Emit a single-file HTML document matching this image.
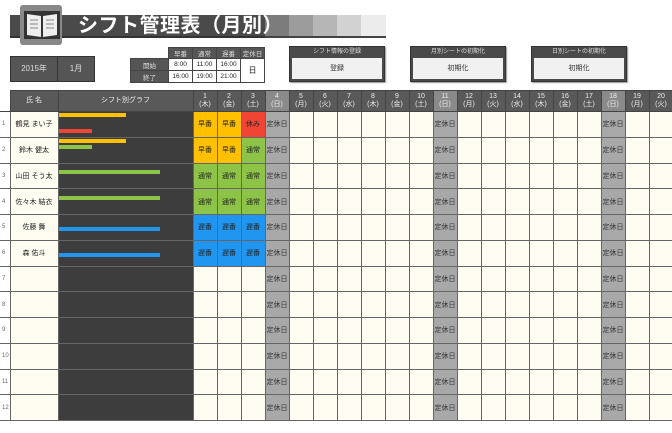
<!DOCTYPE html>
<html><head><meta charset="utf-8">
<style>
*{margin:0;padding:0;box-sizing:border-box}
body{width:672px;height:433px;background:#fff;position:relative;overflow:hidden;font-family:"Liberation Sans","Noto Sans CJK JP",sans-serif;color:#222}
.abs{position:absolute}
table{border-collapse:collapse;table-layout:fixed}
#g{position:absolute;left:0;top:90px;width:673px}
#g td{border:1px solid #555;font-size:7px;text-align:center;overflow:hidden;white-space:nowrap;padding:0}
#g tr.h td{background:#595959;color:#eee;height:21px;line-height:8px;border-color:#444}
#g tr.r td{height:25.75px;background:#fffcf2;border-color:#666}
#g td.n{border:none;border-bottom:1px solid #666;background:#fff !important;color:#666;font-size:6px;text-align:left;padding-left:2px}
#g tr.h td.n{background:#fff !important}
#g td.g{background:#3d3d3d !important;border-color:#2a2a2a}
#g td.y{background:#ffc000 !important}
#g td.rd{background:#f04535 !important}
#g td.gr{background:#8dc447 !important}
#g td.b{background:#2196f0 !important}
#g td.x{background:#a8a8a8 !important;color:#333}
#g tr.h td.x{background:#8a8a8a !important}
.R{color:#e03030}.B{color:#2a8ae8}
.bar{position:absolute;left:59px;height:4px}
.btn{position:absolute;width:96px;height:36px;background:#4a4a4a;border:1px solid #333;box-shadow:1px 1px 1px #999}
.btn .t{color:#ddd;font-size:6px;text-align:center;height:10px;line-height:10px}
.btn .c{position:absolute;left:2px;right:2px;top:11px;bottom:2px;background:#f1f1f1;font-size:7px;text-align:center;line-height:22px;color:#333}
#tt td{border:1px solid #444;font-size:6.5px;text-align:center;padding:0}
</style></head><body>
<!-- title bar -->
<div class="abs" style="left:10px;top:15px;width:255px;height:23px;background:#4a4a4a;border-bottom:2px solid #333"></div>
<div class="abs" style="left:265px;top:15px;width:24px;height:23px;background:#7c7c7c"></div>
<div class="abs" style="left:289px;top:15px;width:24px;height:23px;background:#9c9c9c"></div>
<div class="abs" style="left:313px;top:15px;width:24px;height:23px;background:#b6b6b6"></div>
<div class="abs" style="left:337px;top:15px;width:24px;height:23px;background:#d2d2d2"></div>
<div class="abs" style="left:361px;top:15px;width:25px;height:23px;background:#ececec"></div>
<div class="abs" style="left:265px;top:36px;width:121px;height:2px;background:#444"></div>
<div class="abs" style="left:20px;top:5px;width:42px;height:40px;background:#888;border-radius:3px"></div>
<svg class="abs" style="left:22px;top:9px" width="40" height="32" viewBox="0 0 40 32">
<rect x="2" y="2" width="36" height="28" fill="#333"/>
<path d="M5 5 L19 7 L19 28 L5 26Z" fill="#eee"/><path d="M35 5 L21 7 L21 28 L35 26Z" fill="#eee"/>
<g stroke="#888" stroke-width="1"><path d="M8 11h8M8 15h8M8 19h8M24 11h8M24 15h8M24 19h8"/></g>
</svg>
<div class="abs" style="left:78px;top:15px;font-size:20px;line-height:23px;color:#fff;font-weight:bold;letter-spacing:0.5px">シフト管理表（月別）</div>
<!-- year/month -->
<div class="abs" style="left:10px;top:56px;width:85px;height:26px;background:#555;border:1px solid #333"></div>
<div class="abs" style="left:11px;top:57px;width:47px;height:24px;color:#ddd;font-size:8px;line-height:24px;text-align:center;border-right:1px solid #333">2015年</div>
<div class="abs" style="left:58px;top:57px;width:36px;height:24px;color:#ddd;font-size:8px;line-height:24px;text-align:center">1月</div>
<!-- time table -->
<table id="tt" class="abs" style="left:130px;top:47px;width:135px">
<tr style="height:11px"><td style="border:none;width:38px"></td><td style="background:#555;color:#ddd">早番</td><td style="background:#555;color:#ddd">通常</td><td style="background:#555;color:#ddd">遅番</td><td style="background:#555;color:#ddd">定休日</td></tr>
<tr style="height:12px"><td style="background:#555;color:#ddd">開始</td><td>8:00</td><td>11:00</td><td>16:00</td><td rowspan="2" style="font-size:8px">日</td></tr>
<tr style="height:12px"><td style="background:#555;color:#ddd">終了</td><td>16:00</td><td>19:00</td><td>21:00</td></tr>
</table>
<!-- buttons -->
<div class="btn" style="left:289px;top:46px"><div class="t">シフト情報の登録</div><div class="c">登録</div></div>
<div class="btn" style="left:410px;top:46px"><div class="t">月別シートの初期化</div><div class="c">初期化</div></div>
<div class="btn" style="left:531px;top:46px"><div class="t">日別シートの初期化</div><div class="c">初期化</div></div>
<!-- grid -->
<table id="g">
<colgroup><col style="width:10px"><col style="width:48px"><col style="width:135px">
<col style="width:24px"><col style="width:24px"><col style="width:24px"><col style="width:24px"><col style="width:24px"><col style="width:24px"><col style="width:24px"><col style="width:24px"><col style="width:24px"><col style="width:24px"><col style="width:24px"><col style="width:24px"><col style="width:24px"><col style="width:24px"><col style="width:24px"><col style="width:24px"><col style="width:24px"><col style="width:24px"><col style="width:24px"><col style="width:24px"></colgroup>
<tr class="h"><td class="n"></td><td>氏 名</td><td>シフト別グラフ</td>
<td class="R">1<br>(木)</td><td>2<br>(金)</td><td class="B">3<br>(土)</td><td class="x R">4<br>(日)</td><td>5<br>(月)</td><td>6<br>(火)</td><td>7<br>(水)</td><td>8<br>(木)</td><td>9<br>(金)</td><td class="B">10<br>(土)</td><td class="x R">11<br>(日)</td><td class="R">12<br>(月)</td><td>13<br>(火)</td><td>14<br>(水)</td><td>15<br>(木)</td><td>16<br>(金)</td><td class="B">17<br>(土)</td><td class="x R">18<br>(日)</td><td>19<br>(月)</td><td>20<br>(火)</td></tr>
<tr class="r"><td class="n">1</td><td>鶴見 まい子</td><td class="g"></td><td class="y">早番</td><td class="y">早番</td><td class="rd">休み</td><td class="x">定休日</td><td></td><td></td><td></td><td></td><td></td><td></td><td class="x">定休日</td><td></td><td></td><td></td><td></td><td></td><td></td><td class="x">定休日</td><td></td><td></td></tr>
<tr class="r"><td class="n">2</td><td>鈴木 健太</td><td class="g"></td><td class="y">早番</td><td class="y">早番</td><td class="gr">通常</td><td class="x">定休日</td><td></td><td></td><td></td><td></td><td></td><td></td><td class="x">定休日</td><td></td><td></td><td></td><td></td><td></td><td></td><td class="x">定休日</td><td></td><td></td></tr>
<tr class="r"><td class="n">3</td><td>山田 そう太</td><td class="g"></td><td class="gr">通常</td><td class="gr">通常</td><td class="gr">通常</td><td class="x">定休日</td><td></td><td></td><td></td><td></td><td></td><td></td><td class="x">定休日</td><td></td><td></td><td></td><td></td><td></td><td></td><td class="x">定休日</td><td></td><td></td></tr>
<tr class="r"><td class="n">4</td><td>佐々木 結衣</td><td class="g"></td><td class="gr">通常</td><td class="gr">通常</td><td class="gr">通常</td><td class="x">定休日</td><td></td><td></td><td></td><td></td><td></td><td></td><td class="x">定休日</td><td></td><td></td><td></td><td></td><td></td><td></td><td class="x">定休日</td><td></td><td></td></tr>
<tr class="r"><td class="n">5</td><td>佐藤 舞</td><td class="g"></td><td class="b">遅番</td><td class="b">遅番</td><td class="b">遅番</td><td class="x">定休日</td><td></td><td></td><td></td><td></td><td></td><td></td><td class="x">定休日</td><td></td><td></td><td></td><td></td><td></td><td></td><td class="x">定休日</td><td></td><td></td></tr>
<tr class="r"><td class="n">6</td><td>森 佑斗</td><td class="g"></td><td class="b">遅番</td><td class="b">遅番</td><td class="b">遅番</td><td class="x">定休日</td><td></td><td></td><td></td><td></td><td></td><td></td><td class="x">定休日</td><td></td><td></td><td></td><td></td><td></td><td></td><td class="x">定休日</td><td></td><td></td></tr>
<tr class="r"><td class="n">7</td><td></td><td class="g"></td><td></td><td></td><td></td><td class="x">定休日</td><td></td><td></td><td></td><td></td><td></td><td></td><td class="x">定休日</td><td></td><td></td><td></td><td></td><td></td><td></td><td class="x">定休日</td><td></td><td></td></tr>
<tr class="r"><td class="n">8</td><td></td><td class="g"></td><td></td><td></td><td></td><td class="x">定休日</td><td></td><td></td><td></td><td></td><td></td><td></td><td class="x">定休日</td><td></td><td></td><td></td><td></td><td></td><td></td><td class="x">定休日</td><td></td><td></td></tr>
<tr class="r"><td class="n">9</td><td></td><td class="g"></td><td></td><td></td><td></td><td class="x">定休日</td><td></td><td></td><td></td><td></td><td></td><td></td><td class="x">定休日</td><td></td><td></td><td></td><td></td><td></td><td></td><td class="x">定休日</td><td></td><td></td></tr>
<tr class="r"><td class="n">10</td><td></td><td class="g"></td><td></td><td></td><td></td><td class="x">定休日</td><td></td><td></td><td></td><td></td><td></td><td></td><td class="x">定休日</td><td></td><td></td><td></td><td></td><td></td><td></td><td class="x">定休日</td><td></td><td></td></tr>
<tr class="r"><td class="n">11</td><td></td><td class="g"></td><td></td><td></td><td></td><td class="x">定休日</td><td></td><td></td><td></td><td></td><td></td><td></td><td class="x">定休日</td><td></td><td></td><td></td><td></td><td></td><td></td><td class="x">定休日</td><td></td><td></td></tr>
<tr class="r"><td class="n">12</td><td></td><td class="g"></td><td></td><td></td><td></td><td class="x">定休日</td><td></td><td></td><td></td><td></td><td></td><td></td><td class="x">定休日</td><td></td><td></td><td></td><td></td><td></td><td></td><td class="x">定休日</td><td></td><td></td></tr>
</table>
<!-- bars -->
<div class="bar" style="top:113px;width:67px;background:#ffc000"></div>
<div class="bar" style="top:129px;width:33px;background:#f04535"></div>
<div class="bar" style="top:139px;width:67px;background:#ffc000"></div>
<div class="bar" style="top:145px;width:33px;background:#8dc447"></div>
<div class="bar" style="top:170px;width:101px;background:#8dc447"></div>
<div class="bar" style="top:196px;width:101px;background:#8dc447"></div>
<div class="bar" style="top:227px;width:101px;background:#2196f0"></div>
<div class="bar" style="top:253px;width:101px;background:#2196f0"></div>
</body></html>
